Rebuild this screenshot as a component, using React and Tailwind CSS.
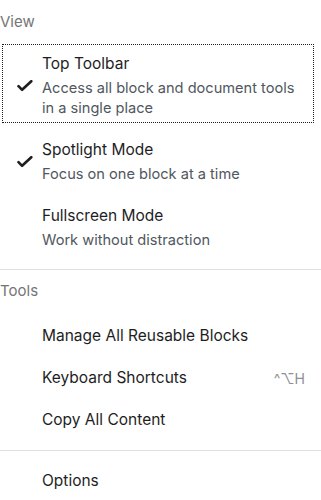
import React from 'react';

const Check = () => (
    <svg width="16" height="12" viewBox="0 0 16 12" className="shrink-0">
        <path d="M1.5 6.2l3.6 3.6L14.3 1.2" fill="none" stroke="#1e1e1e" strokeWidth="2.6" strokeLinecap="round" strokeLinejoin="round" />
    </svg>
);

const ToggleItem = ({ title, desc, checked, focused }) => (
    <div
        className={`flex items-center border pt-[9px] pb-1 ${focused ? 'border-dotted border-[#1e1e1e]' : 'border-transparent'}`}
    >
        <div className="w-[39px] flex justify-center pl-1">{checked && <Check />}</div>
        <div className="flex flex-col">
            <span className="text-[15.5px] leading-5 text-[#1e1e1e]">{title}</span>
            <span className="mt-1 text-[14.6px] leading-5 text-[#50575e]">{desc}</span>
        </div>
    </div>
);

const PlainItem = ({ label, shortcut }) => (
    <div className="flex h-9 items-center pl-[42px] pr-4">
        <span className="text-[15.5px] text-[#1e1e1e]">{label}</span>
        {shortcut && <span className="ml-auto text-[14px] text-[#8c8f94]">{shortcut}</span>}
    </div>
);

export default function App() {
    return (
        <div className="w-[321px] h-[500px] overflow-hidden bg-white font-['Inter',sans-serif]">
            {/* View */}
            <div className="pt-3 text-[15px] leading-5 text-[#757575]">View</div>
            <div className="mt-3 mr-[7px] ml-[2px] flex flex-col gap-[7px]">
                <ToggleItem
                    title="Top Toolbar"
                    desc={<>Access all block and document tools<br />in a single place</>}
                    checked
                    focused
                />
                <ToggleItem title="Spotlight Mode" desc="Focus on one block at a time" checked />
                <ToggleItem title="Fullscreen Mode" desc="Work without distraction" />
            </div>
            <div className="mt-[14px] border-t border-[#e0e0e0]" />

            {/* Tools */}
            <div className="pt-[11px] text-[15px] leading-5 text-[#757575]">Tools</div>
            <div className="mt-[17px] flex flex-col gap-[6px]">
                <PlainItem label="Manage All Reusable Blocks" />
                <PlainItem label="Keyboard Shortcuts" shortcut="^⌥H" />
                <PlainItem label="Copy All Content" />
            </div>
            <div className="mt-3 border-t border-[#e0e0e0]" />
            <div className="mt-3">
                <PlainItem label="Options" />
            </div>
        </div>
    );
}
